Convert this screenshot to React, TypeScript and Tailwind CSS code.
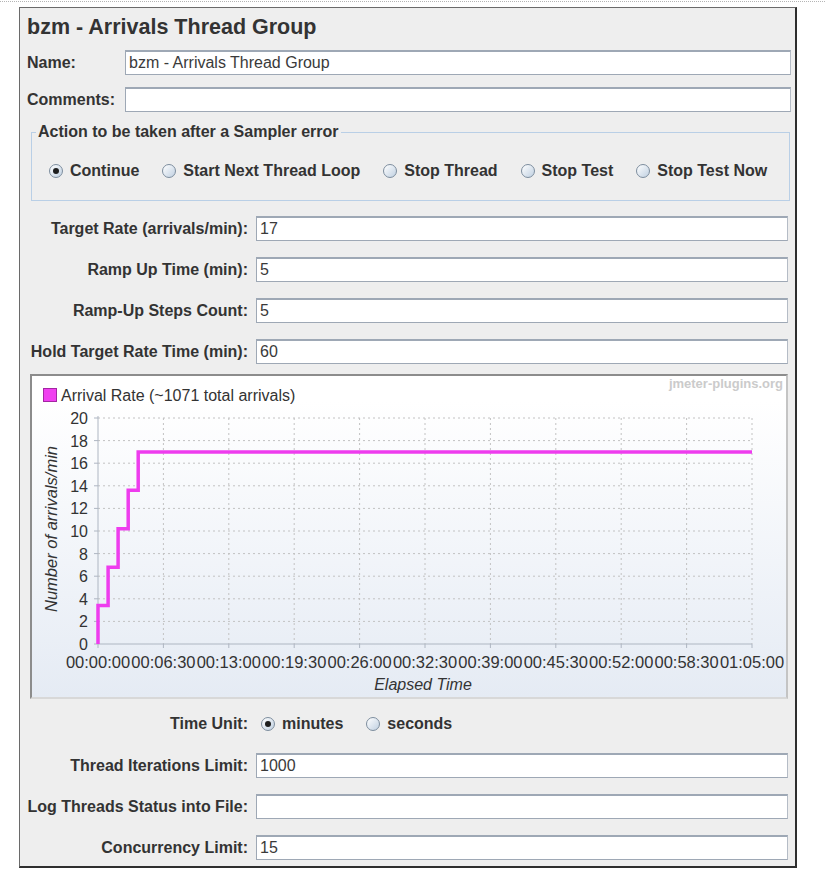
import React from "react";

const Radio = ({ checked }: { checked?: boolean }) => (
  <span className="inline-flex h-[14px] w-[14px] shrink-0 items-center justify-center rounded-full border border-[#7d8d9e] bg-linear-to-br from-white to-[#c0d0e1]">
    {checked && <span className="h-[6px] w-[6px] rounded-full bg-[#1e1e1e]" />}
  </span>
);

const RadioItem = ({ label, checked }: { label: string; checked?: boolean }) => (
  <span className="flex items-center gap-[7px]">
    <Radio checked={checked} />
    <span className="text-[16px] font-bold leading-[20px] text-[#333]">{label}</span>
  </span>
);

const Input = ({ value = "", className = "" }: { value?: string; className?: string }) => (
  <div
    className={
      "flex h-[25px] items-center border border-t-2 border-[#9ea8b5] border-r-[#b5bcc6] bg-white pl-[3px] text-[16px] leading-[20px] text-[#3a3a3a] " +
      className
    }
  >
    {value}
  </div>
);

const FieldRow = ({ label, value }: { label: string; value?: string }) => (
  <div className="flex h-[25px] items-center">
    <div className="w-[228px] text-right text-[16px] font-bold leading-[20px] text-[#333]">{label}</div>
    <Input value={value} className="ml-[8px] w-[532px]" />
  </div>
);

const Chart = () => {
  const X0 = 98;
  const X1 = 752;
  const Y0 = 644;
  const YT = 418;
  const xs = Array.from({ length: 11 }, (_, i) => X0 + ((X1 - X0) * i) / 10);
  const ys = Array.from({ length: 11 }, (_, i) => Y0 - ((Y0 - YT) * i) / 10);
  const times = [
    "00:00:00",
    "00:06:30",
    "00:13:00",
    "00:19:30",
    "00:26:00",
    "00:32:30",
    "00:39:00",
    "00:45:30",
    "00:52:00",
    "00:58:30",
    "01:05:00",
  ];
  const ppm = (X1 - X0) / 65;
  const ppu = (Y0 - YT) / 20;
  const pts: [number, number][] = [[X0, Y0]];
  for (let k = 1; k <= 5; k++) {
    const y = Y0 - 3.4 * k * ppu;
    const xPrev = X0 + (k - 1) * ppm;
    pts.push([xPrev, y]);
    if (k < 5) pts.push([X0 + k * ppm, y]);
  }
  pts.push([X1, Y0 - 17 * ppu]);
  const d = pts.map((p, i) => (i === 0 ? "M" : "L") + p[0].toFixed(1) + " " + p[1].toFixed(1)).join(" ");
  const ff = "'Liberation Sans', Arial, sans-serif";
  return (
    <div className="ml-[10px] mt-[10px] h-[325px] w-[758px] border-2 border-[#8c8c8c] border-r-[#c4c4c4] border-b-[#d8d8d8]">
      <svg width={754} height={321} viewBox="32 376 754 321" style={{ display: "block" }}>
        <defs>
          <linearGradient id="bg" x1="0" y1="0" x2="0" y2="1">
            <stop offset="0" stopColor="#ffffff" />
            <stop offset="0.08" stopColor="#ffffff" />
            <stop offset="1" stopColor="#e5ebf4" />
          </linearGradient>
        </defs>
        <rect x={32} y={376} width={754} height={321} fill="url(#bg)" />
        <rect x={43.5} y={388.5} width={13} height={13} fill="#f040f0" stroke="#a326a3" />
        <text x={61} y={401} fontFamily={ff} fontSize={16} fill="#333">
          Arrival Rate (~1071 total arrivals)
        </text>
        <text x={783} y={388} fontFamily={ff} fontSize={13} fontWeight="bold" fill="#cbcbcb" textAnchor="end">
          jmeter-plugins.org
        </text>
        {xs.slice(1).map((x) => (
          <line key={"v" + x} x1={x} y1={YT} x2={x} y2={Y0} stroke="#c2c2c2" strokeDasharray="2 3" />
        ))}
        {ys.slice(1).map((y) => (
          <line key={"h" + y} x1={X0} y1={y} x2={X1} y2={y} stroke="#c2c2c2" strokeDasharray="2 3" />
        ))}
        <line x1={X0} y1={YT - 2} x2={X0} y2={Y0} stroke="#aeb6c2" />
        <line x1={X0} y1={Y0} x2={X1} y2={Y0} stroke="#aeb6c2" />
        {ys.map((y) => (
          <line key={"yt" + y} x1={X0 - 4} y1={y} x2={X0} y2={y} stroke="#aeb6c2" />
        ))}
        {xs.map((x) => (
          <line key={"xt" + x} x1={x} y1={Y0} x2={x} y2={Y0 + 4} stroke="#aeb6c2" />
        ))}
        {ys.map((y, i) => (
          <text key={"yl" + i} x={88} y={y + 6} fontFamily={ff} fontSize={16} fill="#333" textAnchor="end">
            {i * 2}
          </text>
        ))}
        {xs.map((x, i) => (
          <text key={"xl" + i} x={x} y={668} fontFamily={ff} fontSize={16.5} fill="#333" textAnchor="middle">
            {times[i]}
          </text>
        ))}
        <text x={423} y={690} fontFamily={ff} fontSize={16} fontStyle="italic" fill="#333" textAnchor="middle">
          Elapsed Time
        </text>
        <text
          x={57}
          y={529}
          transform="rotate(-90 57 529)"
          fontFamily={ff}
          fontSize={16.5}
          fontStyle="italic"
          fill="#333"
          textAnchor="middle"
        >
          Number of arrivals/min
        </text>
        <path d={d} fill="none" stroke="#ee3cee" strokeWidth={3.5} strokeLinejoin="miter" />
      </svg>
    </div>
  );
};

export default function App() {
  return (
    <div className="min-h-screen bg-white pt-[1px] font-['Liberation_Sans',Arial,sans-serif] text-[#333]">
      <div className="border-t border-dotted border-[#b5b5b5]" />
      <div className="ml-[19px] mt-[5px] w-[778px] border-t border-l border-[#6a6a6a] border-r-2 border-b-2 border-r-[#2e2e2e] border-b-[#2e2e2e] bg-[#eeeeee] pb-[6px]">
        <div className="flex h-[38px] items-center pl-[7px] text-[21.5px] font-bold leading-[24px] text-[#333]">
          bzm - Arrivals Thread Group
        </div>
        <div className="mt-[4px] flex h-[25px] items-center">
          <div className="w-[105px] pl-[7px] text-[16px] font-bold leading-[20px]">Name:</div>
          <Input value="bzm - Arrivals Thread Group" className="w-[666px]" />
        </div>
        <div className="mt-[12px] flex h-[25px] items-center">
          <div className="w-[105px] pl-[7px] text-[16px] font-bold leading-[20px]">Comments:</div>
          <Input className="w-[666px]" />
        </div>
        <fieldset className="ml-[11px] mt-[11px] w-[759px] border border-[#b9cfe6] pb-[19px]">
          <legend className="ml-[4px] px-[2px] text-[16px] font-bold leading-[18px] text-[#333]">
            Action to be taken after a Sampler error
          </legend>
          <div className="mt-[20px] flex h-[20px] items-center gap-[23px] pl-[17px]">
            <RadioItem label="Continue" checked />
            <RadioItem label="Start Next Thread Loop" />
            <RadioItem label="Stop Thread" />
            <RadioItem label="Stop Test" />
            <RadioItem label="Stop Test Now" />
          </div>
        </fieldset>
        <div className="mt-[15px] flex flex-col gap-[16px]">
          <FieldRow label="Target Rate (arrivals/min):" value="17" />
          <FieldRow label="Ramp Up Time (min):" value="5" />
          <FieldRow label="Ramp-Up Steps Count:" value="5" />
          <FieldRow label="Hold Target Rate Time (min):" value="60" />
        </div>
        <Chart />
        <div className="mt-[15px] flex h-[20px] items-center">
          <div className="w-[228px] text-right text-[16px] font-bold leading-[20px]">Time Unit:</div>
          <div className="ml-[13px] flex items-center gap-[23px]">
            <RadioItem label="minutes" checked />
            <RadioItem label="seconds" />
          </div>
        </div>
        <div className="mt-[19px] flex flex-col gap-[16px]">
          <FieldRow label="Thread Iterations Limit:" value="1000" />
          <FieldRow label="Log Threads Status into File:" />
          <FieldRow label="Concurrency Limit:" value="15" />
        </div>
      </div>
    </div>
  );
}
